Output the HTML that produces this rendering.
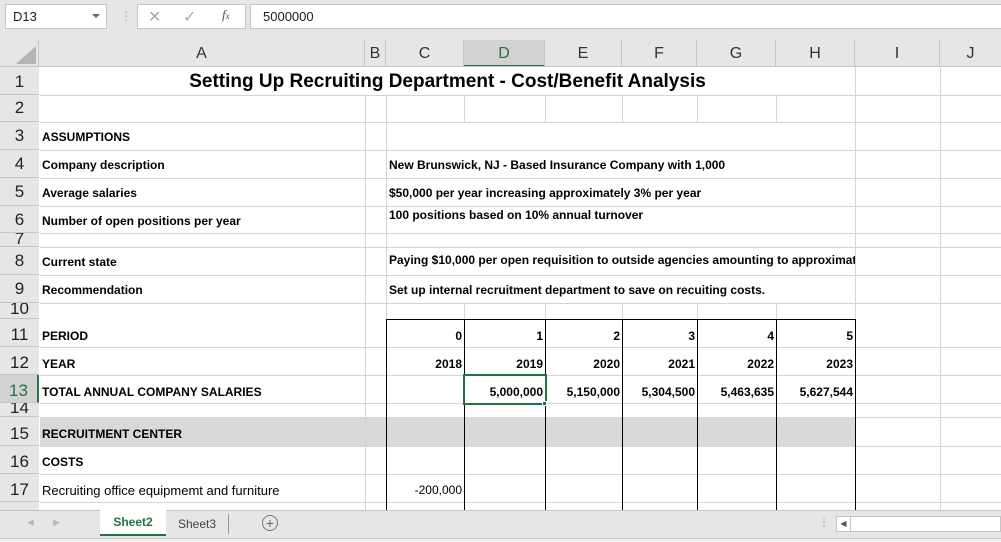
<!DOCTYPE html><html><head><meta charset="utf-8"><style>
*{margin:0;padding:0;box-sizing:border-box}
body{width:1001px;height:542px;overflow:hidden;background:#fff;font-family:"Liberation Sans",sans-serif;position:relative}
.a{position:absolute}
.hl{position:absolute;height:1px;background:#d4d4d4}
.vl{position:absolute;width:1px;background:#d4d4d4}
.bk{background:#000}
.ch{position:absolute;top:40px;height:27px;font-size:16px;color:#333;text-align:center;line-height:28px;border-right:1px solid #c6c6c6;background:#e6e6e6}
.rh{position:absolute;left:0;width:39px;font-size:17px;color:#222;text-align:center;background:#e6e6e6;border-bottom:1px solid #c6c6c6;overflow:hidden;line-height:1}
.t{position:absolute;font-size:12px;font-weight:bold;color:#000;white-space:nowrap}
.r{text-align:right}
</style></head><body>
<div class="a" style="left:0;top:0;width:1001px;height:40px;background:#e6e6e6"></div>
<div class="a" style="left:5px;top:4px;width:102px;height:25px;background:#fff;border:1px solid #c6c6c6;font-size:13px;line-height:23px;padding-left:7px;color:#222">D13<span style="position:absolute;right:6px;top:9px;border-left:4px solid transparent;border-right:4px solid transparent;border-top:4px solid #666"></span></div>
<div class="a" style="left:120px;top:9px;color:#aaa;font-size:12px">⋮</div>
<div class="a" style="left:137px;top:4px;width:109px;height:25px;background:#fff;border:1px solid #c6c6c6"></div>
<div class="a" style="left:148px;top:7px;color:#aaa;font-size:16px">✕</div>
<div class="a" style="left:183px;top:7px;color:#aaa;font-size:16px">✓</div>
<div class="a" style="left:222px;top:7px;color:#555;font-size:13px;font-style:italic;font-family:'Liberation Serif',serif">f<span style="font-size:9px">x</span></div>
<div class="a" style="left:250px;top:4px;width:760px;height:25px;background:#fff;border:1px solid #c6c6c6;font-size:13px;line-height:23px;padding-left:12px;color:#222">5000000</div>
<div class="a" style="left:0;top:40px;width:39px;height:27px;background:#e6e6e6;border-right:1px solid #c6c6c6"></div>
<div class="a" style="left:16px;top:46px;width:0;height:0;border-left:20px solid transparent;border-bottom:18px solid #b4b4b4"></div>
<div class="ch" style="left:39px;width:326px">A</div>
<div class="ch" style="left:365px;width:21px">B</div>
<div class="ch" style="left:386px;width:78px">C</div>
<div class="ch" style="left:464px;width:81px;background:#d2d2d2;border-bottom:2px solid #217346;color:#217346">D</div>
<div class="ch" style="left:545px;width:77px">E</div>
<div class="ch" style="left:622px;width:75px">F</div>
<div class="ch" style="left:697px;width:79px">G</div>
<div class="ch" style="left:776px;width:79px">H</div>
<div class="ch" style="left:855px;width:85px">I</div>
<div class="ch" style="left:940px;width:61px;border-right:0">J</div>
<div class="a" style="left:0;top:66px;width:1001px;height:1px;background:#c6c6c6"></div>
<div class="a" style="left:0;top:67px;width:39px;height:443px;background:#e6e6e6;border-right:1px solid #c6c6c6"></div>
<div class="rh" style="top:67px;height:28px;padding-top:6px">1</div>
<div class="rh" style="top:95px;height:27px;padding-top:4px">2</div>
<div class="rh" style="top:122px;height:28px;padding-top:5px">3</div>
<div class="rh" style="top:150px;height:28px;padding-top:5px">4</div>
<div class="rh" style="top:178px;height:28px;padding-top:5px">5</div>
<div class="rh" style="top:206px;height:27px;padding-top:5px">6</div>
<div class="rh" style="top:233px;height:14px;padding-top:0px;line-height:12px">7</div>
<div class="rh" style="top:247px;height:28px;padding-top:5px">8</div>
<div class="rh" style="top:275px;height:28px;padding-top:5px">9</div>
<div class="rh" style="top:303px;height:16px;line-height:12px">10</div>
<div class="rh" style="top:319px;height:28px;padding-top:7px">11</div>
<div class="rh" style="top:347px;height:28px;padding-top:7px">12</div>
<div class="rh" style="top:375px;height:28px;padding-top:7px;background:#d2d2d2;color:#217346;border-right:2px solid #217346">13</div>
<div class="rh" style="top:403px;height:14px;line-height:10px">14</div>
<div class="rh" style="top:417px;height:29px;padding-top:8px">15</div>
<div class="rh" style="top:446px;height:28px;padding-top:7px">16</div>
<div class="rh" style="top:474px;height:28px;padding-top:7px">17</div>
<div class="rh" style="top:502px;height:8px;border-bottom:0"></div>
<div class="a" style="left:40px;top:417px;width:815px;height:29px;background:#d9d9d9"></div>
<div class="hl" style="left:40px;top:95px;width:961px"></div>
<div class="hl" style="left:40px;top:122px;width:961px"></div>
<div class="hl" style="left:40px;top:150px;width:961px"></div>
<div class="hl" style="left:40px;top:178px;width:961px"></div>
<div class="hl" style="left:40px;top:206px;width:961px"></div>
<div class="hl" style="left:40px;top:233px;width:961px"></div>
<div class="hl" style="left:40px;top:247px;width:961px"></div>
<div class="hl" style="left:40px;top:275px;width:961px"></div>
<div class="hl" style="left:40px;top:303px;width:961px"></div>
<div class="hl" style="left:40px;top:347px;width:961px"></div>
<div class="hl" style="left:40px;top:375px;width:961px"></div>
<div class="hl" style="left:40px;top:403px;width:961px"></div>
<div class="hl" style="left:40px;top:417px;width:961px"></div>
<div class="hl" style="left:40px;top:446px;width:961px"></div>
<div class="hl" style="left:40px;top:474px;width:961px"></div>
<div class="hl" style="left:40px;top:502px;width:961px"></div>
<div class="vl" style="left:365px;top:95px;height:415px"></div>
<div class="vl" style="left:386px;top:95px;height:415px"></div>
<div class="vl" style="left:464px;top:95px;height:27px"></div>
<div class="vl" style="left:545px;top:95px;height:27px"></div>
<div class="vl" style="left:622px;top:95px;height:27px"></div>
<div class="vl" style="left:697px;top:95px;height:27px"></div>
<div class="vl" style="left:776px;top:95px;height:27px"></div>
<div class="vl" style="left:464px;top:303px;height:16px"></div>
<div class="vl" style="left:545px;top:303px;height:16px"></div>
<div class="vl" style="left:622px;top:303px;height:16px"></div>
<div class="vl" style="left:697px;top:303px;height:16px"></div>
<div class="vl" style="left:776px;top:303px;height:16px"></div>
<div class="vl" style="left:855px;top:67px;height:443px"></div>
<div class="vl" style="left:940px;top:67px;height:443px"></div>
<div class="a bk" style="left:386px;top:319px;width:470px;height:1px"></div>
<div class="a bk" style="left:386px;top:319px;width:1px;height:191px"></div>
<div class="a bk" style="left:464px;top:319px;width:1px;height:191px"></div>
<div class="a bk" style="left:545px;top:319px;width:1px;height:191px"></div>
<div class="a bk" style="left:622px;top:319px;width:1px;height:191px"></div>
<div class="a bk" style="left:697px;top:319px;width:1px;height:191px"></div>
<div class="a bk" style="left:776px;top:319px;width:1px;height:191px"></div>
<div class="a bk" style="left:855px;top:319px;width:1px;height:191px"></div>
<div class="a" style="left:463px;top:374px;width:84px;height:31px;border:2px solid #217346"></div>
<div class="a" style="left:542px;top:401px;width:5px;height:5px;background:#217346;border:1px solid #fff"></div>
<div class="t" style="left:40px;width:815px;top:71px;font-size:19px;text-align:center">Setting Up Recruiting Department - Cost/Benefit Analysis</div>
<div class="t" style="left:42px;top:130px">ASSUMPTIONS</div>
<div class="t" style="left:42px;top:158px">Company description</div>
<div class="t" style="left:42px;top:186px">Average salaries</div>
<div class="t" style="left:42px;top:214px">Number of open positions per year</div>
<div class="t" style="left:42px;top:255px">Current state</div>
<div class="t" style="left:42px;top:283px">Recommendation</div>
<div class="t" style="left:389px;top:158px">New Brunswick, NJ - Based Insurance Company with 1,000</div>
<div class="t" style="left:389px;top:186px">$50,000 per year increasing approximately 3% per year</div>
<div class="t" style="left:389px;top:208px">100 positions based on 10% annual turnover</div>
<div class="t" style="left:389px;top:253px;width:466px;overflow:hidden">Paying $10,000 per open requisition to outside agencies amounting to approximately</div>
<div class="t" style="left:389px;top:283px">Set up internal recruitment department to save on recuiting costs.</div>
<div class="t" style="left:42px;top:329px">PERIOD</div>
<div class="t" style="left:42px;top:357px">YEAR</div>
<div class="t" style="left:42px;top:385px">TOTAL ANNUAL COMPANY SALARIES</div>
<div class="t" style="left:42px;top:427px">RECRUITMENT CENTER</div>
<div class="t" style="left:42px;top:455px">COSTS</div>
<div class="t" style="left:42px;top:483px;font-weight:normal;font-size:13px">Recruiting office equipmemt and furniture</div>
<div class="t r" style="left:386px;width:76px;top:329px">0</div>
<div class="t r" style="left:464px;width:79px;top:329px">1</div>
<div class="t r" style="left:545px;width:75px;top:329px">2</div>
<div class="t r" style="left:622px;width:73px;top:329px">3</div>
<div class="t r" style="left:697px;width:77px;top:329px">4</div>
<div class="t r" style="left:776px;width:77px;top:329px">5</div>
<div class="t r" style="left:386px;width:76px;top:357px">2018</div>
<div class="t r" style="left:464px;width:79px;top:357px">2019</div>
<div class="t r" style="left:545px;width:75px;top:357px">2020</div>
<div class="t r" style="left:622px;width:73px;top:357px">2021</div>
<div class="t r" style="left:697px;width:77px;top:357px">2022</div>
<div class="t r" style="left:776px;width:77px;top:357px">2023</div>
<div class="t r" style="left:464px;width:79px;top:385px">5,000,000</div>
<div class="t r" style="left:545px;width:75px;top:385px">5,150,000</div>
<div class="t r" style="left:622px;width:73px;top:385px">5,304,500</div>
<div class="t r" style="left:697px;width:77px;top:385px">5,463,635</div>
<div class="t r" style="left:776px;width:77px;top:385px">5,627,544</div>
<div class="t r" style="left:386px;width:76px;top:483px;font-weight:normal">-200,000</div>
<div class="a" style="left:0;top:510px;width:1001px;height:28px;background:#e6e6e6;border-top:1px solid #c6c6c6"></div>
<div class="a" style="left:0;top:538px;width:1001px;height:4px;background:#f0f0f0;border-top:1px solid #c6c6c6"></div>
<div class="a" style="left:27px;top:517px;font-size:9px;color:#bbb">◀</div>
<div class="a" style="left:53px;top:517px;font-size:9px;color:#bbb">▶</div>
<div class="a" style="left:100px;top:510px;width:66px;height:26px;background:#fff;border-bottom:2px solid #217346;color:#217346;font-weight:bold;font-size:12px;text-align:center;line-height:25px">Sheet2</div>
<div class="a" style="left:166px;top:514px;width:63px;height:20px;color:#444;font-size:12px;text-align:center;line-height:20px;border-right:1px solid #999">Sheet3</div>
<div class="a" style="left:262px;top:515px;width:16px;height:16px;border:1px solid #777;border-radius:50%;color:#666;font-size:14px;text-align:center;line-height:14px">+</div>
<div class="a" style="left:818px;top:515px;color:#aaa;font-size:12px">⋮</div>
<div class="a" style="left:836px;top:516px;width:165px;height:16px;background:#fff;border:1px solid #c6c6c6"></div>
<div class="a" style="left:836px;top:516px;width:15px;height:16px;border:1px solid #c6c6c6;font-size:8px;color:#555;text-align:center;line-height:14px">◀</div>
</body></html>
